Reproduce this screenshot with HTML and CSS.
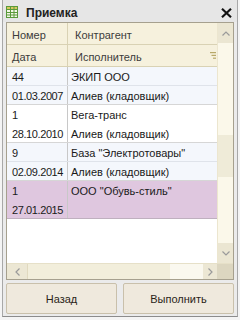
FILE: index.html
```html
<!DOCTYPE html>
<html>
<head>
<meta charset="utf-8">
<link rel="stylesheet" href="styles.css">
</head>
<body>
<div class="window">
  <div class="titlebar">
    <svg class="ticon" width="12" height="12" viewBox="0 0 12 12">
      <rect x="0.5" y="0.5" width="11" height="11" fill="#f4f8e8" stroke="#5a9a3a"/>
      <rect x="1" y="1" width="10" height="2.5" fill="#d8c860"/>
      <line x1="0.5" y1="3.5" x2="11.5" y2="3.5" stroke="#5a9a3a"/>
      <line x1="0.5" y1="6.5" x2="11.5" y2="6.5" stroke="#5a9a3a"/>
      <line x1="0.5" y1="9" x2="11.5" y2="9" stroke="#5a9a3a"/>
      <line x1="4.5" y1="0.5" x2="4.5" y2="11.5" stroke="#5a9a3a"/>
      <line x1="8" y1="0.5" x2="8" y2="11.5" stroke="#5a9a3a"/>
    </svg>
    <span class="title">Приемка</span>
    <svg class="close" width="11" height="10" viewBox="0 0 11 10">
      <path d="M1 0.8 L10 9.2 M10 0.8 L1 9.2" stroke="#111" stroke-width="2.2"/>
    </svg>
  </div>
  <div class="table">
    <div class="main">
      <div class="cols">
        <div class="hrow">
          <div class="c1">Номер</div><div class="c2">Контрагент</div>
        </div>
        <div class="hrow">
          <div class="c1">Дата</div><div class="c2">Исполнитель
            <svg class="sort" width="6" height="7" viewBox="0 0 6 7">
              <rect x="0" y="0" width="6" height="1.2" fill="#b8a868"/>
              <rect x="1.5" y="2.8" width="4.5" height="1.2" fill="#b8a868"/>
              <rect x="3" y="5.6" width="3" height="1.2" fill="#b8a868"/>
            </svg>
          </div>
        </div>
        <div class="rec blue">
          <div class="drow inner"><div class="c1">44</div><div class="c2">ЭКИП ООО</div></div>
          <div class="drow"><div class="c1">01.03.2007</div><div class="c2">Алиев (кладовщик)</div></div>
        </div>
        <div class="rec">
          <div class="drow"><div class="c1">1</div><div class="c2">Вега-транс</div></div>
          <div class="drow"><div class="c1">28.10.2010</div><div class="c2">Алиев (кладовщик)</div></div>
        </div>
        <div class="rec blue">
          <div class="drow inner"><div class="c1">9</div><div class="c2">База "Электротовары"</div></div>
          <div class="drow"><div class="c1">02.09.2014</div><div class="c2">Алиев (кладовщик)</div></div>
        </div>
        <div class="rec sel">
          <div class="drow"><div class="c1">1</div><div class="c2">ООО "Обувь-стиль"</div></div>
          <div class="drow"><div class="c1">27.01.2015</div><div class="c2"></div></div>
        </div>
      </div>
      <div class="vscroll">
        <div class="sbtn">
          <svg width="8" height="5" viewBox="0 0 8 5"><path d="M0.5 4.5 L4 1 L7.5 4.5" fill="none" stroke="#9a9a9a" stroke-width="1.2"/></svg>
        </div>
        <div class="vtrack"><div class="vthumb"></div></div>
        <div class="sbtn">
          <svg width="8" height="5" viewBox="0 0 8 5"><path d="M0.5 0.5 L4 4 L7.5 0.5" fill="none" stroke="#9a9a9a" stroke-width="1.2"/></svg>
        </div>
      </div>
    </div>
    <div class="hscroll">
      <div class="hbtn left">
        <svg width="5" height="8" viewBox="0 0 5 8"><path d="M4.5 0.5 L1 4 L4.5 7.5" fill="none" stroke="#9a9a9a" stroke-width="1.2"/></svg>
      </div>
      <div class="hthumb"></div>
      <div class="htrack"></div>
      <div class="hbtn right">
        <svg width="5" height="8" viewBox="0 0 5 8"><path d="M0.5 0.5 L4 4 L0.5 7.5" fill="none" stroke="#9a9a9a" stroke-width="1.2"/></svg>
      </div>
      <div class="corner"></div>
    </div>
  </div>
  <div class="buttons">
    <div class="btn">Назад</div>
    <div class="btn">Выполнить</div>
  </div>
</div>
</body>
</html>
```
FILE: styles.css
```css
html, body {
  margin: 0;
  padding: 0;
  background: #f4f4f4;
  width: 240px;
  height: 320px;
  overflow: hidden;
}
body {
  font-family: "Liberation Sans", Arial, sans-serif;
  font-size: 11px;
  color: #1a1a1a;
}
.window {
  margin-left: 2px;
  width: 228px;
  height: 316px;
  border-left: 1px solid #a8a8a8;
  border-right: 1px solid #a8a8a8;
  border-bottom: 1px solid #8c8c8c;
  background: #ebebeb;
  padding: 0 3px;
  display: flex;
  flex-direction: column;
}
.titlebar {
  height: 22px;
  display: flex;
  align-items: center;
  background: #e6e6e6;
  margin: 0 -3px;
  padding: 0 3px;
}
.ticon {
  margin-top: 2px;
}
.title {
  font-weight: bold;
  font-size: 12px;
  margin-left: 8px;
  color: #222;
  margin-top: 4px;
}
.close {
  margin-left: auto;
  margin-right: 2px;
  margin-top: 3px;
}
.table {
  height: 256px;
  border: 1px solid #a6a08e;
  background: #fff;
  display: flex;
  flex-direction: column;
}
.main {
  flex: 1;
  display: flex;
  min-height: 0;
}
.cols {
  flex: 1;
  display: flex;
  flex-direction: column;
  background: #fff;
}
.hrow {
  height: 22px;
  box-sizing: border-box;
  border-bottom: 1px solid #d9d2b4;
  background: #f6f1dd;
  display: flex;
  color: #3c3c3c;
}
.hrow .c1, .hrow .c2 {
  display: flex;
  align-items: center;
  padding-top: 2px;
}
.hrow .c1 {
  border-right: 1px solid #d9d2b4;
  letter-spacing: 0;
}
.hrow .c2 {
  padding-left: 7px;
}
.c1 {
  flex: none;
  width: 61px;
  border-right: 1px solid #c8c8c8;
  padding-left: 5px;
  box-sizing: border-box;
}
.drow .c1 {
  letter-spacing: -0.4px;
}
.c2 {
  flex: 1;
  padding-left: 3px;
}
.sort {
  margin-left: auto;
  margin-right: 1px;
  margin-top: -2px;
}
.rec {
  border-bottom: 1px solid #d6d6d6;
  background: #fff;
}
.rec.blue {
  background: #f4f7fc;
}
.rec.sel {
  background: #dfc7df;
  border-bottom-color: #bfb0bf;
}
.drow {
  height: 19px;
  box-sizing: border-box;
  display: flex;
}
.rec .drow:last-child {
  height: 18px;
}
.drow.inner {
  border-bottom: 1px solid #dfe3ea;
}
.drow .c1, .drow .c2 {
  display: flex;
  align-items: center;
  padding-top: 1px;
}
.vscroll {
  width: 16px;
  flex: none;
  display: flex;
  flex-direction: column;
  background: #fbf8ea;
  border-left: 1px solid #ece6cf;
  box-sizing: border-box;
}
.sbtn {
  height: 20px;
  background: #ebe6d2;
  display: flex;
  align-items: center;
  justify-content: center;
}
.vtrack {
  flex: 1;
  padding-top: 92px;
}
.vthumb {
  height: 42px;
  background: #efebd8;
}
.hscroll {
  height: 16px;
  display: flex;
  background: #f3efdc;
  border-top: 1px solid #e6e0c8;
  box-sizing: border-box;
}
.hbtn {
  width: 20px;
  display: flex;
  align-items: center;
  justify-content: center;
  background: #ece7d4;
}
.hbtn.left {
  border-right: 1px solid #e0d9bf;
}
.hthumb {
  width: 142px;
  background: #f2eedb;
}
.htrack {
  flex: 1;
  background: #faf8ef;
}
.hbtn.right {
  width: 14px;
}
.corner {
  width: 16px;
  background: #dcd6c0;
}
.buttons {
  margin-top: 3px;
  display: flex;
  gap: 6px;
}
.btn {
  flex: 1;
  height: 31px;
  box-sizing: border-box;
  border: 1px solid #c9c0ab;
  border-radius: 2px;
  background: #efe9dd;
  display: flex;
  align-items: center;
  justify-content: center;
  color: #2a2418;
}
```
